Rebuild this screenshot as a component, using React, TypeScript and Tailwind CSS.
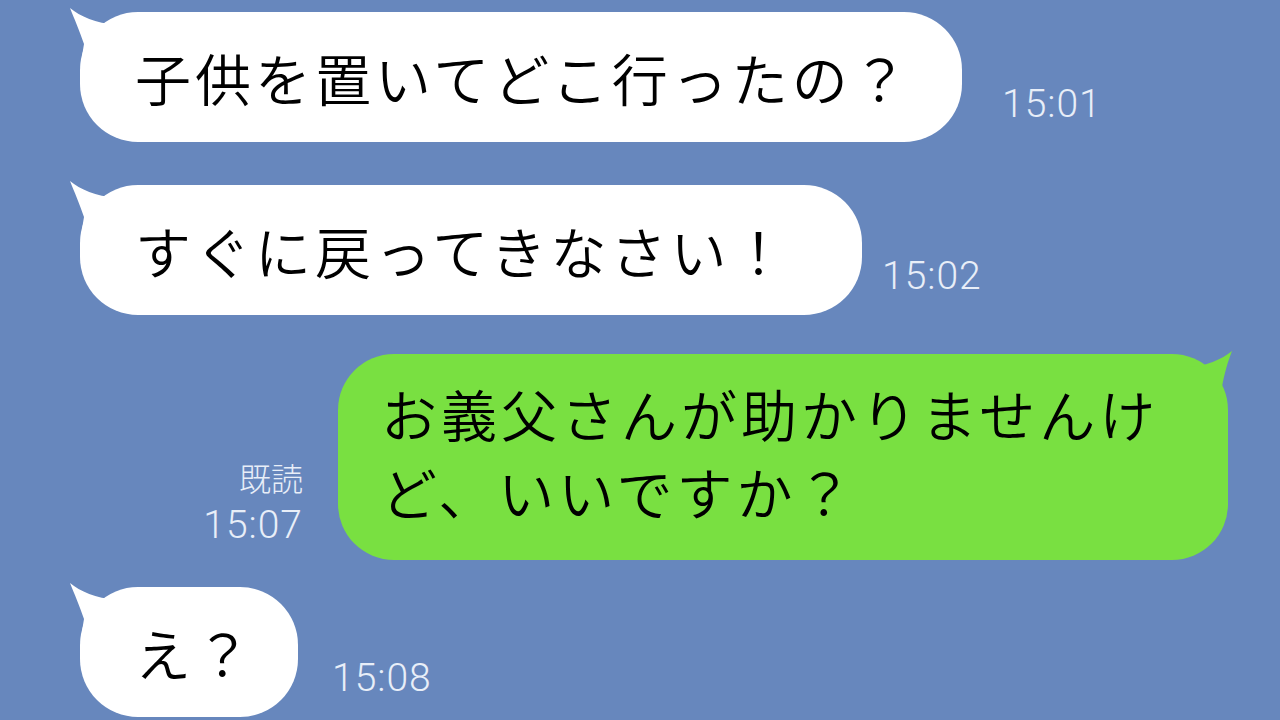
import React from 'react';

const jp = { fontFamily: '"Noto Sans CJK JP", "Noto Sans", sans-serif' };
const num = { fontFamily: 'Roboto, "Liberation Sans", sans-serif' };

const LeftTail: React.FC<{ color: string }> = ({ color }) => (
  <svg className="absolute -left-[14px] -top-[8px]" width="60" height="60" viewBox="0 0 60 60">
    <path d="M4 4 C14 12 30 20 50 20 L50 52 L16 52 L18 40 C14 28 8 14 4 4 Z" fill={color} />
  </svg>
);

const RightTail: React.FC<{ color: string }> = ({ color }) => (
  <svg className="absolute -right-[8px] -top-[7px]" width="60" height="60" viewBox="0 0 60 60">
    <path d="M56 4 C46 12 30 20 10 20 L10 52 L44 52 L46 40 C48 28 52 14 56 4 Z" fill={color} />
  </svg>
);

const Time: React.FC<{ children: React.ReactNode; className?: string }> = ({ children, className }) => (
  <div className={`text-[39px] leading-none font-light text-[#e8eef8] tracking-[1px] ${className ?? ''}`} style={num}>
    {children}
  </div>
);

const IncomingBubble: React.FC<{ text: string; width: string }> = ({ text, width }) => (
  <div className={`relative h-[130px] ${width} rounded-[58px] bg-white flex items-center pl-[55px]`}>
    <LeftTail color="#ffffff" />
    <span className="relative text-[56px] leading-none font-[350] text-black tracking-[4px] whitespace-nowrap" style={jp}>
      {text}
    </span>
  </div>
);

export default function App() {
  return (
    <div className="w-[1280px] h-[720px] overflow-hidden bg-[#6787bd] flex flex-col">
      {/* 1 */}
      <div className="flex items-end pl-[80px] mt-[12px]">
        <IncomingBubble text="子供を置いてどこ行ったの？" width="w-[882px]" />
        <Time className="ml-[40px] mb-[18px]">15:01</Time>
      </div>

      {/* 2 */}
      <div className="flex items-end pl-[80px] mt-[43px]">
        <IncomingBubble text="すぐに戻ってきなさい！" width="w-[782px]" />
        <Time className="ml-[20px] mb-[19px]">15:02</Time>
      </div>

      {/* 3 sent */}
      <div className="flex items-end justify-end pr-[52px] mt-[39px]">
        <div className="flex flex-col items-end mr-[35px] mb-[15px]">
          <div className="text-[32px] leading-none font-light text-[#e8eef8] mb-[13px]" style={jp}>既読</div>
          <Time>15:07</Time>
        </div>
        <div className="relative h-[206px] w-[890px] rounded-[56px] bg-[#79e041] flex items-center pl-[43px]">
          <RightTail color="#79e041" />
          <div className="relative text-[56px] leading-[78px] font-[350] text-black tracking-[4px] mb-[10px]" style={jp}>
            <div className="whitespace-nowrap">お義父さんが助かりませんけ</div>
            <div className="whitespace-nowrap">ど、いいですか？</div>
          </div>
        </div>
      </div>

      {/* 4 */}
      <div className="flex items-end pl-[80px] mt-[27px]">
        <IncomingBubble text="え？" width="w-[218px]" />
        <Time className="ml-[34px] mb-[19px]">15:08</Time>
      </div>
    </div>
  );
}
